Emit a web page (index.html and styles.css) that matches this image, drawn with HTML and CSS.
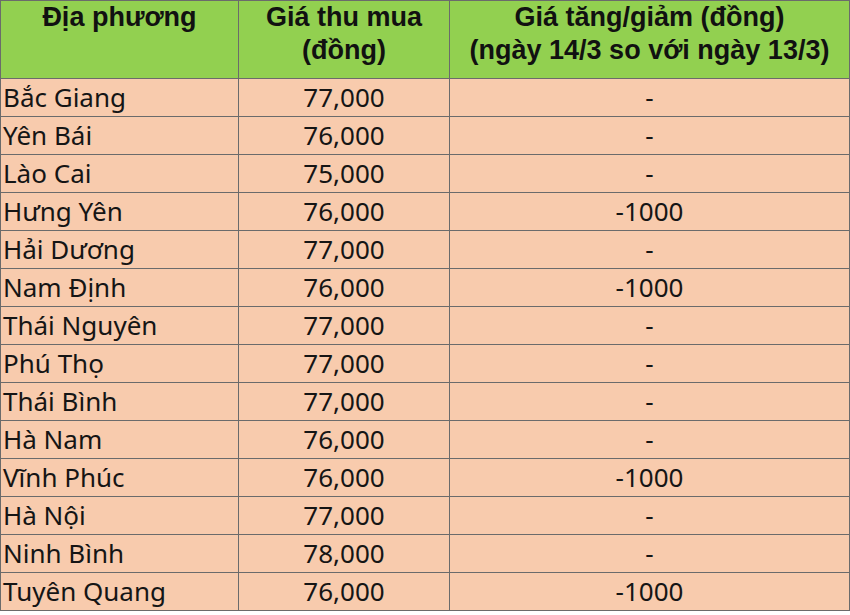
FILE: index.html
```html
<!DOCTYPE html>
<html lang="vi">
<head>
<meta charset="utf-8">
<link rel="stylesheet" href="styles.css">
</head>
<body>
<table class="price">
<colgroup><col class="c1"><col class="c2"><col class="c3"></colgroup>
<thead>
<tr>
<th>Địa phương</th>
<th>Giá thu mua<br>(đồng)</th>
<th>Giá tăng/giảm (đồng)<br>(ngày 14/3 so với ngày 13/3)</th>
</tr>
</thead>
<tbody>
<tr><td class="name">Bắc Giang</td><td>77,000</td><td>-</td></tr>
<tr><td class="name">Yên Bái</td><td>76,000</td><td>-</td></tr>
<tr><td class="name">Lào Cai</td><td>75,000</td><td>-</td></tr>
<tr><td class="name">Hưng Yên</td><td>76,000</td><td>-1000</td></tr>
<tr><td class="name">Hải Dương</td><td>77,000</td><td>-</td></tr>
<tr><td class="name">Nam Định</td><td>76,000</td><td>-1000</td></tr>
<tr><td class="name">Thái Nguyên</td><td>77,000</td><td>-</td></tr>
<tr><td class="name">Phú Thọ</td><td>77,000</td><td>-</td></tr>
<tr><td class="name">Thái Bình</td><td>77,000</td><td>-</td></tr>
<tr><td class="name">Hà Nam</td><td>76,000</td><td>-</td></tr>
<tr><td class="name">Vĩnh Phúc</td><td>76,000</td><td>-1000</td></tr>
<tr><td class="name">Hà Nội</td><td>77,000</td><td>-</td></tr>
<tr><td class="name">Ninh Bình</td><td>78,000</td><td>-</td></tr>
<tr><td class="name">Tuyên Quang</td><td>76,000</td><td>-1000</td></tr>
</tbody>
</table>
</body>
</html>
```
FILE: styles.css
```css
html, body { margin: 0; padding: 0; background: #ffffff; }
.price {
  border-collapse: collapse;
  table-layout: fixed;
  width: 849px;
}
.c1 { width: 238px; }
.c2 { width: 211px; }
.c3 { width: 400px; }
.price th, .price td {
  border: 1px solid #6b6b6b;
  padding: 0;
  overflow: hidden;
  white-space: nowrap;
}
.price th {
  background: #92d050;
  font-family: "Liberation Sans", Arial, sans-serif;
  font-weight: bold;
  font-size: 27px;
  line-height: 33px;
  color: #111;
  height: 78px;
  box-sizing: border-box;
  vertical-align: top;
  text-align: center;
  padding-top: 0;
}
.price td {
  background: #f8cbad;
  font-family: "Noto Sans", "Open Sans", sans-serif;
  font-size: 26px;
  color: #151515;
  height: 37px;
  line-height: 37px;
  text-align: center;
}
.price td.name { text-align: left; padding-left: 2px; }
```
